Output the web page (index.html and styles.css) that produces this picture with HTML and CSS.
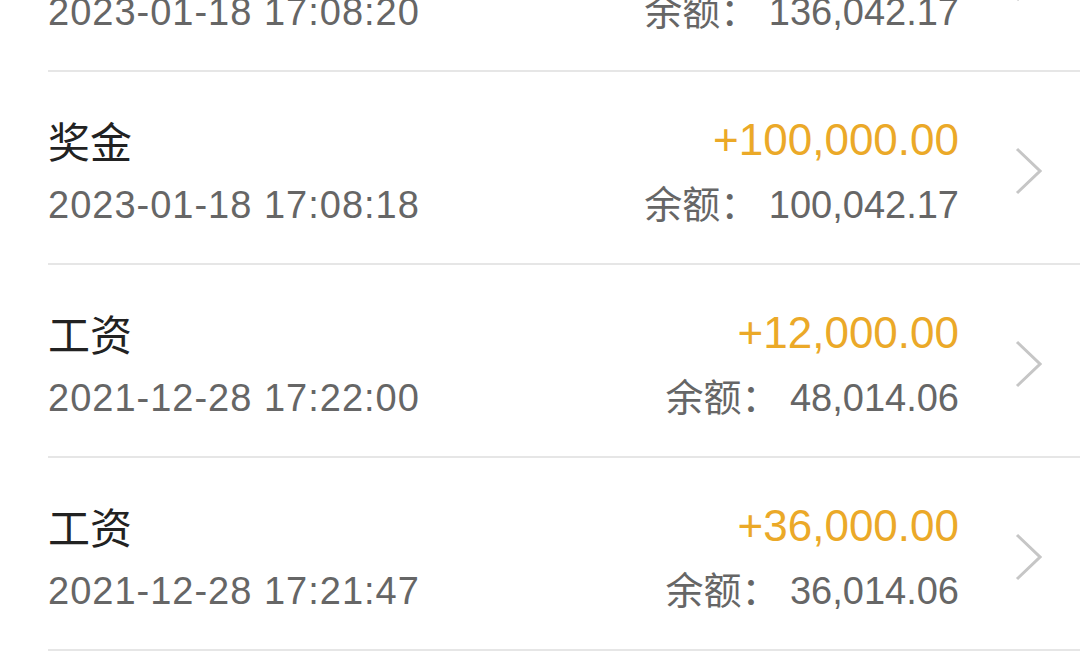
FILE: index.html
```html
<!DOCTYPE html>
<html lang="zh-CN">
<head>
  <meta charset="UTF-8">
  <meta name="viewport" content="width=device-width, initial-scale=1.0">
  <title>收支明细</title>
  <link rel="stylesheet" href="styles.css">
</head>
<body>
  <ul class="record-list">
    <li class="record">
      <div class="record-left">
        <div class="record-title">奖金</div>
        <div class="record-time">2023-01-18 17:08:20</div>
      </div>
      <div class="record-right">
        <div class="record-amount">+36,000.00</div>
        <div class="record-balance">余额： 136,042.17</div>
      </div>
      <svg class="chevron" width="27" height="48" viewBox="0 0 27 48"><polyline points="2,2 25,24 2,46" /></svg>
    </li>
    <li class="record">
      <div class="record-left">
        <div class="record-title">奖金</div>
        <div class="record-time">2023-01-18 17:08:18</div>
      </div>
      <div class="record-right">
        <div class="record-amount">+100,000.00</div>
        <div class="record-balance">余额： 100,042.17</div>
      </div>
      <svg class="chevron" width="27" height="48" viewBox="0 0 27 48"><polyline points="2,2 25,24 2,46" /></svg>
    </li>
    <li class="record">
      <div class="record-left">
        <div class="record-title">工资</div>
        <div class="record-time">2021-12-28 17:22:00</div>
      </div>
      <div class="record-right">
        <div class="record-amount">+12,000.00</div>
        <div class="record-balance">余额： 48,014.06</div>
      </div>
      <svg class="chevron" width="27" height="48" viewBox="0 0 27 48"><polyline points="2,2 25,24 2,46" /></svg>
    </li>
    <li class="record">
      <div class="record-left">
        <div class="record-title">工资</div>
        <div class="record-time">2021-12-28 17:21:47</div>
      </div>
      <div class="record-right">
        <div class="record-amount">+36,000.00</div>
        <div class="record-balance">余额： 36,014.06</div>
      </div>
      <svg class="chevron" width="27" height="48" viewBox="0 0 27 48"><polyline points="2,2 25,24 2,46" /></svg>
    </li>
  </ul>
</body>
</html>
```
FILE: styles.css
```css
* {
  margin: 0;
  padding: 0;
  box-sizing: border-box;
}
body {
  font-family: 'Liberation Sans', 'Noto Sans CJK SC', sans-serif;
  background-color: #fff;
  color: #666;
  overflow: hidden;
}
/* list is scrolled: the first row is cut off at the top */
.record-list {
  list-style: none;
  padding-left: 48px;
  margin-top: -121px;
}
.record {
  display: flex;
  align-items: center;
  padding: 40px 38px 33px 0;
  border-bottom: 2px solid #e6e6e6;
}
.record-left {
  flex: 1;
  display: flex;
  flex-direction: column;
  gap: 12px;
}
.record-right {
  display: flex;
  flex-direction: column;
  align-items: flex-end;
  gap: 12px;
}
.record-title {
  font-family: 'Noto Sans CJK SC', sans-serif;
  font-size: 42px;
  line-height: 56px;
  color: #222;
}
.record-time,
.record-balance {
  font-size: 38px;
  line-height: 50px;
  color: #666;
}
.record-time {
  letter-spacing: 1px;
}
.record-amount {
  font-size: 44px;
  line-height: 56px;
  color: #eba928;
}
.chevron {
  margin-left: 56px;
  fill: none;
  stroke: #c6c6c6;
  stroke-width: 3;
}
```
